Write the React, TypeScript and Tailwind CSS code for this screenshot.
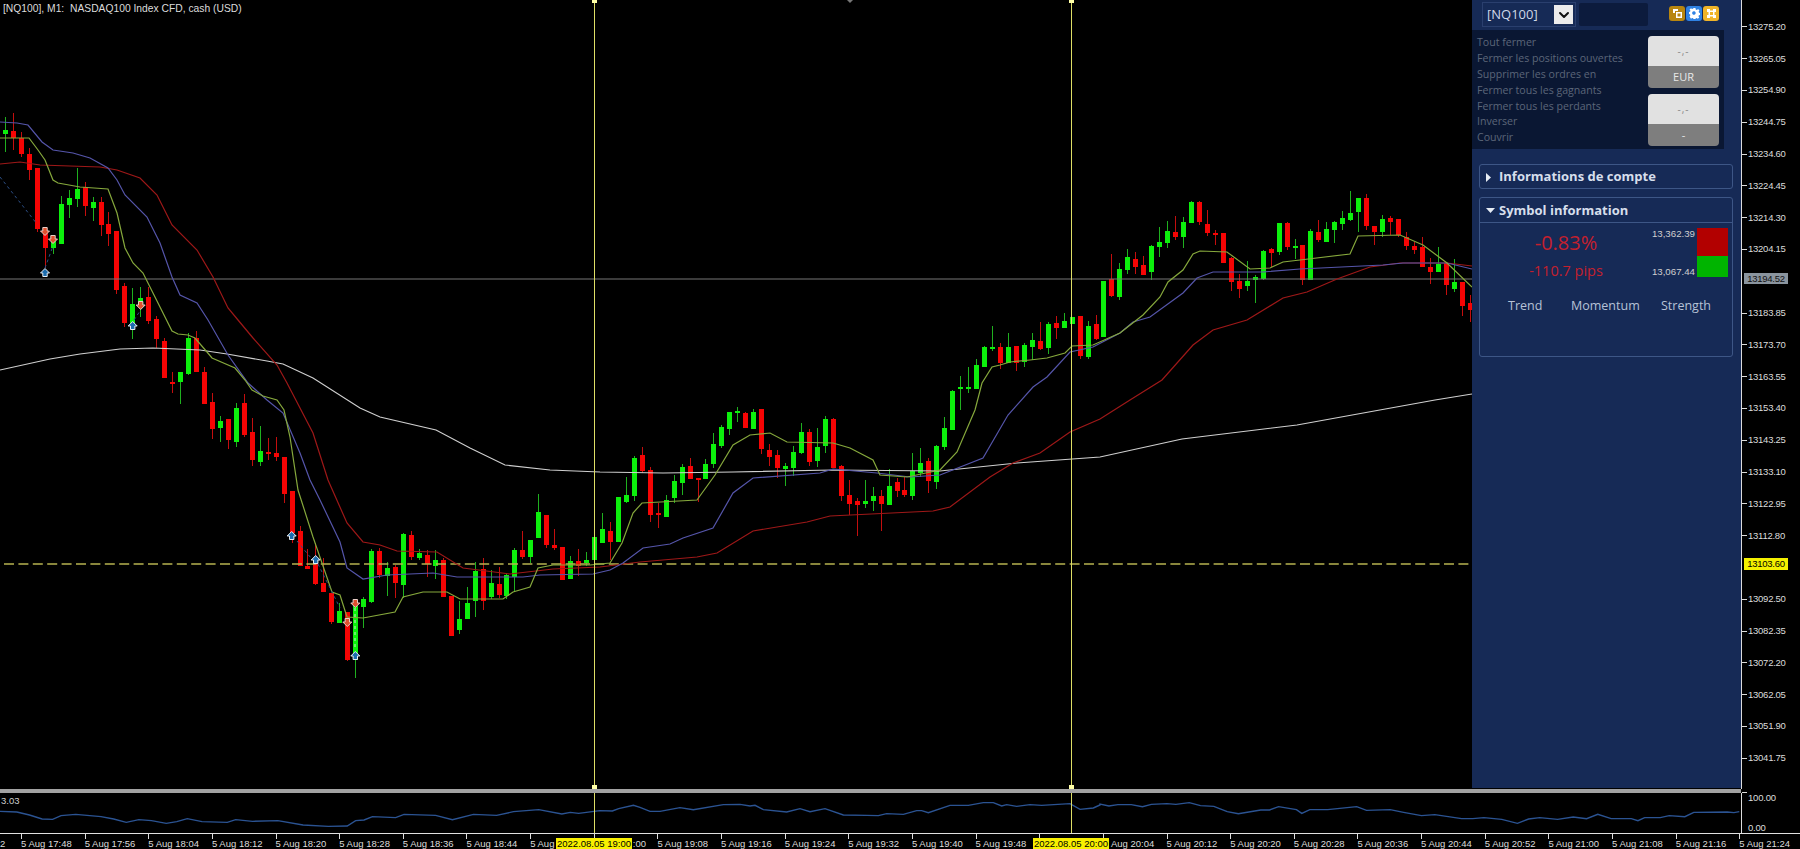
import React from "react";
import { ChevronDown } from "lucide-react";

type Candle = [string, number, number, number, number];
type Pt = number[];

// colour, wick top, body top, body bottom, wick bottom
const candles: Candle[] = [
  ["g",117,130,134,152],["r",113,131,138,150],["r",132,138,154,157],["r",148,154,170,180],["r",168,168,229,232],
  ["r",228,232,248,268],["g",241,241,248,254],["g",196,204,244,244],["g",190,198,205,218],["g",168,189,199,207],
  ["r",182,187,206,216],["g",197,202,208,221],["r",197,202,225,236],["r",212,224,234,246],["r",231,231,290,294],
  ["r",283,286,323,327],["g",288,304,323,339],["g",287,298,306,317],["r",287,297,321,324],["r",316,319,339,348],
  ["r",338,341,378,378],["r",372,382,384,393],["g",372,372,382,404],["g",333,338,374,375],["r",331,338,372,372],
  ["r",367,372,404,404],["r",393,402,429,439],["g",416,421,428,442],["r",419,419,440,449],["g",403,408,442,447],
  ["r",394,403,435,437],["r",418,432,460,466],["g",426,451,462,466],["r",438,452,454,460],["r",437,453,457,461],
  ["r",457,457,494,503],["r",491,491,533,543],["r",526,531,566,566],["r",549,566,569,569],["r",543,563,584,585],
  ["r",558,583,592,592],["r",593,593,622,624],["g",603,611,623,623],["r",612,612,660,661],["g",604,606,660,678],
  ["g",597,599,607,628],["g",549,551,602,603],["r",548,551,575,578],["g",562,568,576,596],["r",565,567,583,598],
  ["g",533,534,585,598],["r",531,535,557,560],["g",549,553,558,560],["r",550,555,564,577],["g",550,560,566,579],
  ["r",558,560,597,597],["r",596,596,636,636],["g",601,619,630,634],["g",587,603,619,619],["g",562,571,601,617],
  ["r",558,569,601,610],["g",570,583,597,599],["r",567,584,595,598],["g",574,575,596,599],["g",548,550,577,592],
  ["r",531,550,557,559],["g",540,540,557,563],["g",494,512,538,538],["r",515,515,545,548],["r",529,545,548,550],
  ["r",547,547,580,580],["g",556,561,579,579],["r",549,561,566,576],["g",552,560,563,566],["g",537,537,560,560],
  ["g",513,529,543,543],["r",522,531,542,560],["g",497,497,542,542],["g",477,495,502,503],["g",456,458,496,501],
  ["r",447,455,471,473],["r",467,470,515,522],["r",503,513,515,528],["g",495,500,517,517],["g",475,481,498,503],
  ["g",464,467,483,495],["r",458,466,479,479],["r",478,478,480,502],["g",459,464,479,479],["g",433,444,464,468],
  ["g",425,427,446,448],["g",412,412,429,435],["g",407,411,413,422],["r",412,413,428,428],["g",409,412,429,429],
  ["r",409,409,449,454],["r",444,450,457,466],["r",450,455,468,478],["g",463,466,469,486],["g",446,452,468,476],
  ["g",423,432,453,454],["r",429,432,462,466],["g",428,447,461,467],["g",416,419,446,453],["r",418,419,468,468],
  ["r",465,466,496,501],["r",480,495,504,515],["r",498,501,505,536],["g",480,501,504,508],["g",487,496,501,511],
  ["r",490,496,504,531],["g",469,486,505,505],["r",478,482,491,497],["r",477,490,495,497],["g",453,471,496,500],
  ["g",448,463,473,477],["r",458,461,481,493],["g",445,446,482,489],["g",417,428,447,450],["g",390,391,430,430],
  ["g",376,387,389,410],["g",367,387,389,393],["g",359,365,389,389],["g",346,347,367,367],["g",326,347,349,351],
  ["r",343,347,363,369],["g",333,347,363,363],["r",346,346,363,371],["g",343,345,362,367],["g",333,340,347,360],
  ["r",322,341,349,350],["g",322,324,348,354],["r",316,323,328,339],["g",313,321,328,328],["g",317,317,324,324],
  ["r",316,316,356,359],["g",321,326,357,359],["r",315,324,339,340],["g",281,281,337,337],["r",254,279,296,297],
  ["g",263,269,297,300],["g",249,257,270,274],["r",252,259,267,274],["r",256,265,275,275],["g",245,246,272,280],
  ["g",227,242,247,257],["g",221,231,243,248],["r",216,232,237,240],["g",217,222,237,248],["g",201,202,223,223],
  ["r",201,202,222,225],["r",210,224,233,236],["r",230,233,235,245],["r",233,233,263,263],["r",257,258,282,291],
  ["r",274,281,289,298],["g",261,281,286,291],["g",275,277,280,303],["g",250,251,279,280],["r",248,249,253,267],
  ["g",223,223,252,255],["r",222,223,247,250],["g",239,246,248,259],["r",245,245,280,285],["g",229,231,280,280],
  ["r",220,232,240,242],["g",222,229,242,242],["g",221,222,230,243],["g",211,218,224,230],["g",191,213,220,221],
  ["g",198,198,212,232],["r",194,198,226,230],["r",226,226,232,245],["g",215,219,232,237],["r",216,218,222,235],
  ["r",219,219,235,237],["r",232,237,246,250],["r",242,246,250,254],["r",237,247,267,267],["r",258,267,272,284],
  ["g",247,264,272,272],["r",263,263,285,295],["g",259,282,289,292],["r",282,282,306,316],["r",295,303,310,322],
];

const greenLine: Pt[] = [
  [0,138],[29,138],[38,150],[45,160],[53,180],[58,183],[80,187],[108,189],[117,213],[125,248],[133,263],[143,273],
  [153,293],[163,313],[172,331],[178,334],[188,335],[195,338],[207,352],[212,358],[235,368],[245,380],[252,390],
  [263,396],[277,400],[284,410],[290,437],[298,490],[313,537],[332,592],[340,595],[347,617],[363,618],[395,612],
  [403,597],[423,592],[447,592],[460,599],[503,599],[513,592],[530,587],[538,568],[553,565],[590,565],[610,563],
  [622,543],[633,513],[642,503],[697,500],[715,475],[733,445],[750,435],[770,433],[787,442],[833,443],[850,448],
  [873,460],[880,475],[907,477],[940,470],[957,452],[975,410],[982,383],[992,367],[1000,365],[1010,362],[1030,360],
  [1047,358],[1065,353],[1072,346],[1093,345],[1120,333],[1143,315],[1160,297],[1168,282],[1183,270],[1193,254],
  [1200,251],[1227,252],[1250,269],[1270,268],[1283,262],[1300,260],[1350,254],[1358,236],[1400,235],[1423,245],
  [1447,263],[1472,287],
];

const blueLine: Pt[] = [
  [0,122],[17,123],[28,125],[42,142],[53,150],[73,153],[90,158],[108,168],[117,180],[125,195],[147,217],[160,243],
  [172,277],[180,295],[197,303],[208,320],[228,355],[248,383],[267,400],[283,413],[300,453],[310,480],[320,500],
  [340,542],[347,568],[363,579],[387,575],[433,573],[457,577],[523,577],[540,575],[593,574],[610,570],[623,563],
  [643,548],[670,544],[683,538],[713,528],[733,493],[753,478],[820,473],[833,469],[877,473],[910,477],[940,475],
  [983,458],[1008,415],[1033,387],[1047,377],[1070,352],[1093,347],[1120,333],[1133,322],[1150,317],[1183,293],
  [1197,278],[1213,272],[1263,272],[1300,269],[1383,265],[1403,263],[1447,263],[1472,269],
];

const redLine: Pt[] = [
  [0,164],[20,162],[40,165],[100,167],[117,170],[140,178],[157,195],[172,225],[197,250],[213,277],[228,308],[238,320],
  [253,338],[277,365],[287,383],[313,433],[328,480],[347,523],[363,542],[380,545],[397,551],[437,552],[463,568],
  [510,574],[553,569],[600,567],[640,562],[697,557],[717,553],[753,531],[807,522],[830,516],[933,511],[950,507],
  [990,477],[1013,463],[1040,453],[1070,432],[1100,419],[1130,400],[1162,380],[1193,345],[1213,330],[1247,320],
  [1283,298],[1307,292],[1337,279],[1370,267],[1400,263],[1447,263],[1472,266],
];

const whiteLine: Pt[] = [
  [0,370],[50,359],[80,354],[120,349],[153,348],[200,350],[227,354],[267,361],[283,364],[313,378],[360,408],[380,417],
  [436,430],[470,448],[505,465],[550,470],[600,472],[663,473],[733,472],[833,470],[940,471],[1017,463],[1100,457],[1182,439],
  [1297,425],[1435,400],[1472,394],
];

// read off the crops, converted in place
const osc: Pt[] = [
  ...[[0,124],[40,126],[70,135],[100,147],[125,148],[145,137],[180,133],[240,140],[270,147],[300,157],[330,149],[360,152],[395,160],[420,155],[445,146],[480,155],[540,157],[560,149],[600,154],[660,152],[720,165],[780,169],[825,168],[845,152],[865,150],[885,140],[940,143],[960,133],[1035,136],[1075,149],[1125,133],[1180,136],[1220,125],[1280,119],[1335,132],[1355,127],[1375,130],[1425,122],[1455,123],[1470,116],[1505,106]].map(([x, y]) => [x / 2.376, y / 3 - 23]),
  ...[[0,112],[30,124],[60,124],[120,113],[160,119],[250,104],[300,103],[330,108],[345,106],[370,119],[440,126],[480,116],[510,125],[555,116],[610,135],[680,136],[715,137],[740,131],[790,133],[830,122],[845,122],[865,128],[930,106],[985,106],[1030,98],[1060,98],[1085,108],[1100,104],[1130,109],[1170,104],[1205,106],[1290,101],[1320,118],[1360,114],[1380,105]].map(([x, y]) => [x / 3 + 640, y / 3 - 23]),
  ...[[0,102],[20,108],[40,104],[70,104],[95,110],[115,103],[150,101],[170,103],[200,98],[225,107],[255,109],[285,125],[310,131],[360,120],[380,120],[400,110],[440,119],[452,130],[470,119],[510,119],[575,110],[597,121],[650,119],[680,127],[720,137],[750,134],[810,146],[835,146],[860,143],[900,148],[935,160],[960,147],[985,143],[1025,148],[1060,141],[1090,146],[1115,133],[1145,146],[1190,146],[1205,152],[1220,143],[1255,143],[1275,137],[1310,140],[1330,127],[1405,126],[1420,128],[1432,125]].map(([x, y]) => [x / 2.24 + 1100, y / 3 - 23]),
];

const prices = [
  "13275.20","13265.05","13254.90","13244.75","13234.60","13224.45","13214.30","13204.15","",
  "13183.85","13173.70","13163.55","13153.40","13143.25","13133.10","13122.95","13112.80","",
  "13092.50","13082.35","13072.20","13062.05","13051.90","13041.75",
];

const times = [
  "17:48","17:56","18:04","18:12","18:20","18:28","18:36","18:44","18:52","19:00","19:08","19:16","19:24","19:32",
  "19:40","19:48","19:56","20:04","20:12","20:20","20:28","20:36","20:44","20:52","21:00","21:08","21:16","21:24",
];

// the date tags hide part of these labels
const cutLabels: Record<string, React.ReactNode> = {
  "18:52": <div className="pt-[4px] -ml-px">5 Aug</div>,
  "19:00": <div className="pt-[4px] pl-[38px]">:00</div>,
  "19:56": null,
  "20:04": <div className="pt-[4px] pl-[7px] whitespace-nowrap">Aug 20:04</div>,
};

const closeLabels = [
  "Tout fermer",
  "Fermer les positions ouvertes",
  "Supprimer les ordres en",
  "Fermer tous les gagnants",
  "Fermer tous les perdants",
  "Inverser",
  "Couvrir",
];

const toPoints = (pts: Pt[]) => pts.map((p) => p.join(",")).join(" ");

function Marker({ x, y, up }: { x: number; y: number; up?: boolean }) {
  return (
    <polygon
      transform={`translate(${x} ${y}) scale(1 ${up ? 1 : -1})`}
      points="0,-4.5 4.5,0 2.2,0 2.2,3.5 -2.2,3.5 -2.2,0 -4.5,0"
      fill={up ? "#1c6cae" : "#e0502e"}
      stroke={up ? "#e8eef4" : "#e8cfc8"}
      strokeWidth="1"
    />
  );
}

function MainChart() {
  return (
    <div className="relative w-[1472px] h-[789px] overflow-hidden">
      <svg width="1472" height="789" className="block">
        {candles.map((c, i) => {
          const x = Math.round(5 + 7.96 * i);
          const green = c[0] === "g";
          return (
            <g key={i} shapeRendering="crispEdges">
              <rect x={x} y={c[1]} width="1" height={c[4] - c[1]} fill={green ? "#1fb01f" : "#c40e0e"} />
              <rect
                x={x - 2}
                y={c[2]}
                width="5"
                height={Math.max(c[3] - c[2], 2)}
                fill={green ? "#0cf00c" : "#f60404"}
              />
            </g>
          );
        })}
        <line x1="0" y1="279" x2="1472" y2="279" stroke="#767676" strokeWidth="1.2" />
        <line x1="4" y1="564" x2="1472" y2="564" stroke="#b6b250" strokeWidth="1.5" strokeDasharray="10 4.4" />
        <polyline points={toPoints(whiteLine)} fill="none" stroke="#d0d0d0" strokeWidth="1.1" />
        <polyline points={toPoints(redLine)} fill="none" stroke="#9e1818" strokeWidth="1.2" />
        <polyline points={toPoints(blueLine)} fill="none" stroke="#5555aa" strokeWidth="1.2" />
        <polyline points={toPoints(greenLine)} fill="none" stroke="#86a83c" strokeWidth="1.2" />
        <g stroke="#2c4f86" strokeWidth="1" strokeDasharray="3 3" fill="none">
          <line x1="0" y1="177" x2="37" y2="224" />
          <line x1="45" y1="268" x2="53" y2="246" />
          <line x1="297" y1="541" x2="311" y2="558" />
          <line x1="318" y1="564" x2="340" y2="608" />
          <line x1="134" y1="320" x2="140" y2="311" />
        </g>
        <line x1="355" y1="608" x2="355" y2="650" stroke="#c8f0c8" strokeWidth="1" strokeDasharray="3 3" />
        <line x1="594" y1="0" x2="594" y2="789" stroke="#dede66" strokeWidth="1" shapeRendering="crispEdges" />
        <line x1="1071.5" y1="0" x2="1071.5" y2="789" stroke="#dede66" strokeWidth="1" shapeRendering="crispEdges" />
        <g fill="#ffffa8" shapeRendering="crispEdges">
          <rect x="592" y="0" width="5" height="3" />
          <rect x="1069" y="0" width="5" height="3" />
          <rect x="592" y="785" width="5" height="5" />
          <rect x="1069" y="785" width="5" height="5" />
        </g>
        <polygon points="847,0 853,0 850,3" fill="#777" />
        <Marker x={45} y={273} up />
        <Marker x={132.7} y={326} up />
        <Marker x={291.7} y={536} up />
        <Marker x={315.7} y={560} up />
        <Marker x={355.3} y={656} up />
        <Marker x={45} y={231} />
        <Marker x={53} y={239} />
        <Marker x={140.7} y={305} />
        <Marker x={347.3} y={622} />
        <Marker x={355.3} y={603} />
      </svg>
      <div className="absolute left-[3px] top-[2px] text-[10.3px] leading-[14px] text-[#dcdcdc] whitespace-pre font-['Liberation_Sans',sans-serif]">
        [NQ100], M1:  NASDAQ100 Index CFD, cash (USD)
      </div>
    </div>
  );
}

function ToolIcon({ bg, kind }: { bg: string; kind: number }) {
  return (
    <div className={`w-[16px] h-[15px] rounded-[3px] flex items-center justify-center ${bg}`}>
      <svg width="11" height="11" viewBox="0 0 11 11" fill="#fff">
        {kind === 0 && (
          <path d="M1 1h5v2H3v2H1zM4 4h6v6H4zm1.5 1.5v3h3v-3z" fillRule="evenodd" />
        )}
        {kind === 1 && (
          <path
            d="M4.4 0h2.2l.3 1.6 1.2.5L9.5 1.2 11 2.8l-.9 1.3.5 1.2 1.4.3v2.2l-1.6.2-.5 1.2.9 1.3-1.6 1.5-1.3-.9-1.2.5-.2 1.4H4.4l-.3-1.5-1.2-.5-1.3.9L0 9.4l.9-1.3-.5-1.2L-1 6.7V4.5l1.5-.3.5-1.2L0 1.7 1.6.2l1.3.9 1.2-.5zM5.5 3.7a2 2 0 100 3.8 2 2 0 000-3.8z"
            fillRule="evenodd"
            transform="scale(.9) translate(.6 0)"
          />
        )}
        {kind === 2 && (
          <path d="M1 1h3v1.5h3V1h3v3H8.5v3H10v3H7V8.5H4V10H1V7h1.5V4H1zm3 3v3h3V4z" fillRule="evenodd" />
        )}
      </svg>
    </div>
  );
}

function ValueCard({ bottom }: { bottom: string }) {
  return (
    <div className="w-[71px] h-[52px] rounded-[4px] overflow-hidden flex flex-col">
      <div className="h-[30px] bg-[#e1e1e1] flex items-center justify-center text-[10px] tracking-[1px] text-[#8a8a8a]">-,-</div>
      <div className="flex-1 bg-[#7e7e7e] flex items-center justify-center text-[11px] text-[#e8e8e8]">{bottom}</div>
    </div>
  );
}

function Panel() {
  return (
    <div className="w-[269px] h-[788px] shrink-0 bg-[#162a56] font-['Open_Sans',sans-serif]">
      <div className="h-[30px] flex pt-[2px] pl-[10px]">
        <div className="w-[94px] h-[25px] border border-[#2a3f6e] flex items-center justify-between pl-[4px] pr-[2px]">
          <span className="text-[13px] text-[#cfd8e8]">[NQ100]</span>
          <span className="w-[19px] h-[19px] bg-[#ececec] flex items-center justify-center">
            <ChevronDown size={16} strokeWidth={3} color="#111" />
          </span>
        </div>
        <div className="ml-[3px] mt-[1px] w-[69px] h-[23px] rounded-[2px] bg-[#0c1b3d]" />
        <div className="ml-[21px] mt-[4px] flex gap-[1px]">
          <ToolIcon bg="bg-[#b8860f]" kind={0} />
          <ToolIcon bg="bg-[#2f82e4]" kind={1} />
          <ToolIcon bg="bg-[#f0b429]" kind={2} />
        </div>
      </div>

      <div className="w-[252px] h-[119px] bg-[#0a1733] flex justify-between pl-[5px] pr-[5px]">
        <div className="flex flex-col pt-[5px]">
          {closeLabels.map((label) => (
            <div key={label} className="h-[15.9px] leading-[15.9px] text-[10.6px] text-[#5c6679] whitespace-nowrap">
              {label}
            </div>
          ))}
        </div>
        <div className="flex flex-col gap-[6px] pt-[6px]">
          <ValueCard bottom="EUR" />
          <ValueCard bottom="-" />
        </div>
      </div>

      <div className="mt-[15px] ml-[7px] w-[254px] h-[25px] rounded-[3px] border border-[#3d5686] flex items-center pl-[6px] pt-[1px]">
        <svg width="5" height="9" viewBox="0 0 5 9" className="mr-[8px]">
          <path d="M0 0l5 4.5L0 9z" fill="#e6ecf4" />
        </svg>
        <span className="text-[13px] font-bold text-[#d6dfec]">Informations de compte</span>
      </div>

      <div className="mt-[8px] ml-[7px] w-[254px] h-[160px] rounded-[3px] border border-[#3d5686] flex flex-col">
        <div className="h-[25px] shrink-0 border-b border-[#3d5686] flex items-center pl-[6px] pt-[1px]">
          <svg width="9" height="5" viewBox="0 0 9 5" className="mr-[4px]">
            <path d="M0 0h9L4.5 5z" fill="#e6ecf4" />
          </svg>
          <span className="text-[13px] font-bold text-[#d6dfec]">Symbol information</span>
        </div>
        <div className="flex pt-[5px] pl-[30px] pr-[4px]">
          <div className="w-[141px] flex flex-col items-center text-[#c4202e] pr-[29px]">
            <span className="text-[20px] leading-[30px]">-0.83%</span>
            <span className="text-[14.5px] leading-[24px] mt-[1px]">-110.7 pips</span>
          </div>
          <div className="w-[46px] h-[49px] flex flex-col justify-between items-end pr-[2px] text-[9.7px] font-['Liberation_Sans',sans-serif] text-[#cfcfcf]">
            <span className="leading-[12px]">13,362.39</span>
            <span className="leading-[12px] mb-[-1px]">13,067.44</span>
          </div>
          <div className="w-[31px] flex flex-col">
            <div className="h-[28px] bg-[#b20000]" />
            <div className="h-[21px] bg-[#00b400]" />
          </div>
        </div>
        <div className="flex mt-[14px] text-[12.5px] text-[#b6c2d6]">
          <span className="ml-[28px] w-[63px]">Trend</span>
          <span className="w-[90px]">Momentum</span>
          <span>Strength</span>
        </div>
      </div>
    </div>
  );
}

function PriceAxis() {
  return (
    <div className="relative flex-1 h-full border-l border-[#dcdcdc] pt-[11px] text-[9.5px] tracking-[-0.25px] text-[#dcdcdc] font-['Liberation_Sans',sans-serif]">
      {prices.map((p, i) => (
        <div key={i} className="h-[31.8px] flex items-center">
          {p && (
            <>
              <span className="w-[5px] h-px bg-[#dcdcdc] mr-[1px]" />
              {p}
            </>
          )}
        </div>
      ))}
      <div className="absolute left-[2px] top-[273px] w-[44px] h-[11px] bg-[#8a949e] text-[#111] leading-[11px] text-center">13194.52</div>
      <div className="absolute left-[2px] top-[558px] w-[44px] h-[12px] bg-[#f4f000] text-black leading-[12px] text-center">13103.60</div>
    </div>
  );
}

function Oscillator() {
  return (
    <div className="flex h-[40px]">
      <div className="relative w-[1741px] overflow-hidden">
        <svg width="1741" height="40" className="block">
          <polyline points={toPoints(osc)} fill="none" stroke="#2b5392" strokeWidth="1.4" />
          <line x1="594" y1="0" x2="594" y2="40" stroke="#dede66" shapeRendering="crispEdges" />
          <line x1="1071.5" y1="0" x2="1071.5" y2="40" stroke="#dede66" shapeRendering="crispEdges" />
        </svg>
        <span className="absolute left-[1px] top-[1px] text-[9.5px] text-[#cfcfcf] font-['Liberation_Sans',sans-serif]">3.03</span>
      </div>
      <div className="flex-1 border-l border-[#dcdcdc] flex flex-col justify-between text-[9.5px] tracking-[-0.2px] text-[#dcdcdc] font-['Liberation_Sans',sans-serif]">
        <div className="flex items-center h-[12px] -mt-[1px]">
          <span className="w-[5px] h-px bg-[#dcdcdc] mr-[1px] self-start" />
          100.00
        </div>
        <div className="flex items-center h-[12px] mb-[-1px]">
          <span className="w-[5px] h-px bg-[#dcdcdc] mr-[1px] self-end" />
          0.00
        </div>
      </div>
    </div>
  );
}

function TimeAxis() {
  return (
    <div className="relative h-[16px] border-t border-[#e0e0e0] flex overflow-hidden text-[9.5px] leading-[12px] text-[#dcdcdc] font-['Liberation_Sans',sans-serif]">
      <div className="w-[21px] shrink-0 pt-[4px]">2</div>
      {times.map((t) => (
        <div key={t} className="w-[63.65px] shrink-0 border-l border-[#dcdcdc] h-[5px]">
          {t in cutLabels ? cutLabels[t] : <div className="pt-[4px] -ml-px whitespace-nowrap">5 Aug {t}</div>}
        </div>
      ))}
      <div className="absolute left-[556px] top-[4px] w-[76px] h-[11px] bg-[#f8f000] text-black leading-[11px] text-center whitespace-nowrap">2022.08.05 19:00</div>
      <div className="absolute left-[1033px] top-[4px] w-[76px] h-[11px] bg-[#f8f000] text-black leading-[11px] text-center whitespace-nowrap">2022.08.05 20:00</div>
    </div>
  );
}

function App() {
  return (
    <div className="w-[1800px] h-[849px] bg-black overflow-hidden flex flex-col">
      <div className="flex h-[789px]">
        <MainChart />
        <Panel />
        <PriceAxis />
      </div>
      <div className="h-[4px] w-[1741px] bg-[#a2a2a2]" />
      <Oscillator />
      <TimeAxis />
    </div>
  );
}

export default App;
